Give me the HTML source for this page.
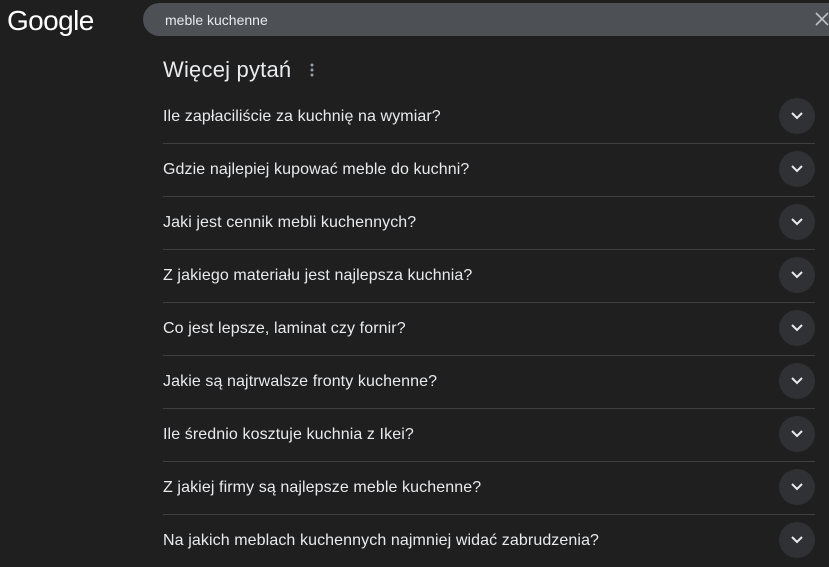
<!DOCTYPE html>
<html><head><meta charset="utf-8"><style>
body{margin:0;width:829px;height:565px;background:#1f1f1f;font-family:"Liberation Sans",Arial,sans-serif;overflow:hidden;position:relative;color:#e8eaed}
.logo{position:absolute;left:7px;top:5px;font-size:28px;color:#fff;letter-spacing:-0.6px}
.search{position:absolute;left:143px;top:3px;width:720px;height:33px;background:#4d5156;border-radius:17px}
.search span{position:absolute;left:22px;top:9px;font-size:14px;color:#e8eaed}
.x{position:absolute;left:815px;top:12px}
h2{position:absolute;left:163px;top:57px;margin:0;font-weight:normal;font-size:22px;color:#e8eaed;letter-spacing:0.2px}
.dots{position:absolute;left:310px;top:63px}
.row{position:absolute;left:163px;width:652px;height:53px;border-bottom:1px solid #3c4043}
.row span{position:absolute;left:0;top:18px;font-size:16px;letter-spacing:0.1px}
.c{position:absolute;left:616px;top:8px;width:36px;height:36px;border-radius:50%;background:#303134}
.c svg{position:absolute;left:11px;top:12px}
</style></head><body>
<div class="logo">Google</div>
<div class="search"><span>meble kuchenne</span></div>
<svg class="x" width="14" height="14" viewBox="0 0 14 14"><path d="M1 1L13 13M13 1L1 13" stroke="#bdc1c6" stroke-width="1.6"/></svg>
<h2>Więcej pytań</h2>
<svg class="dots" width="4" height="14"><circle cx="2" cy="2" r="1.5" fill="#9aa0a6"/><circle cx="2" cy="7" r="1.5" fill="#9aa0a6"/><circle cx="2" cy="12" r="1.5" fill="#9aa0a6"/></svg>
<div class="row" style="top:90px"><span>Ile zapłaciliście za kuchnię na wymiar?</span><div class="c"><svg width="14" height="12"><path d="M2 3L7 8L12 3" stroke="#e8eaed" stroke-width="2" fill="none"/></svg></div></div>
<div class="row" style="top:143px"><span>Gdzie najlepiej kupować meble do kuchni?</span><div class="c"><svg width="14" height="12"><path d="M2 3L7 8L12 3" stroke="#e8eaed" stroke-width="2" fill="none"/></svg></div></div>
<div class="row" style="top:196px"><span>Jaki jest cennik mebli kuchennych?</span><div class="c"><svg width="14" height="12"><path d="M2 3L7 8L12 3" stroke="#e8eaed" stroke-width="2" fill="none"/></svg></div></div>
<div class="row" style="top:249px"><span>Z jakiego materiału jest najlepsza kuchnia?</span><div class="c"><svg width="14" height="12"><path d="M2 3L7 8L12 3" stroke="#e8eaed" stroke-width="2" fill="none"/></svg></div></div>
<div class="row" style="top:302px"><span>Co jest lepsze, laminat czy fornir?</span><div class="c"><svg width="14" height="12"><path d="M2 3L7 8L12 3" stroke="#e8eaed" stroke-width="2" fill="none"/></svg></div></div>
<div class="row" style="top:355px"><span>Jakie są najtrwalsze fronty kuchenne?</span><div class="c"><svg width="14" height="12"><path d="M2 3L7 8L12 3" stroke="#e8eaed" stroke-width="2" fill="none"/></svg></div></div>
<div class="row" style="top:408px"><span>Ile średnio kosztuje kuchnia z Ikei?</span><div class="c"><svg width="14" height="12"><path d="M2 3L7 8L12 3" stroke="#e8eaed" stroke-width="2" fill="none"/></svg></div></div>
<div class="row" style="top:461px"><span>Z jakiej firmy są najlepsze meble kuchenne?</span><div class="c"><svg width="14" height="12"><path d="M2 3L7 8L12 3" stroke="#e8eaed" stroke-width="2" fill="none"/></svg></div></div>
<div class="row" style="top:514px;border-bottom:none"><span>Na jakich meblach kuchennych najmniej widać zabrudzenia?</span><div class="c"><svg width="14" height="12"><path d="M2 3L7 8L12 3" stroke="#e8eaed" stroke-width="2" fill="none"/></svg></div></div>
</body></html>
